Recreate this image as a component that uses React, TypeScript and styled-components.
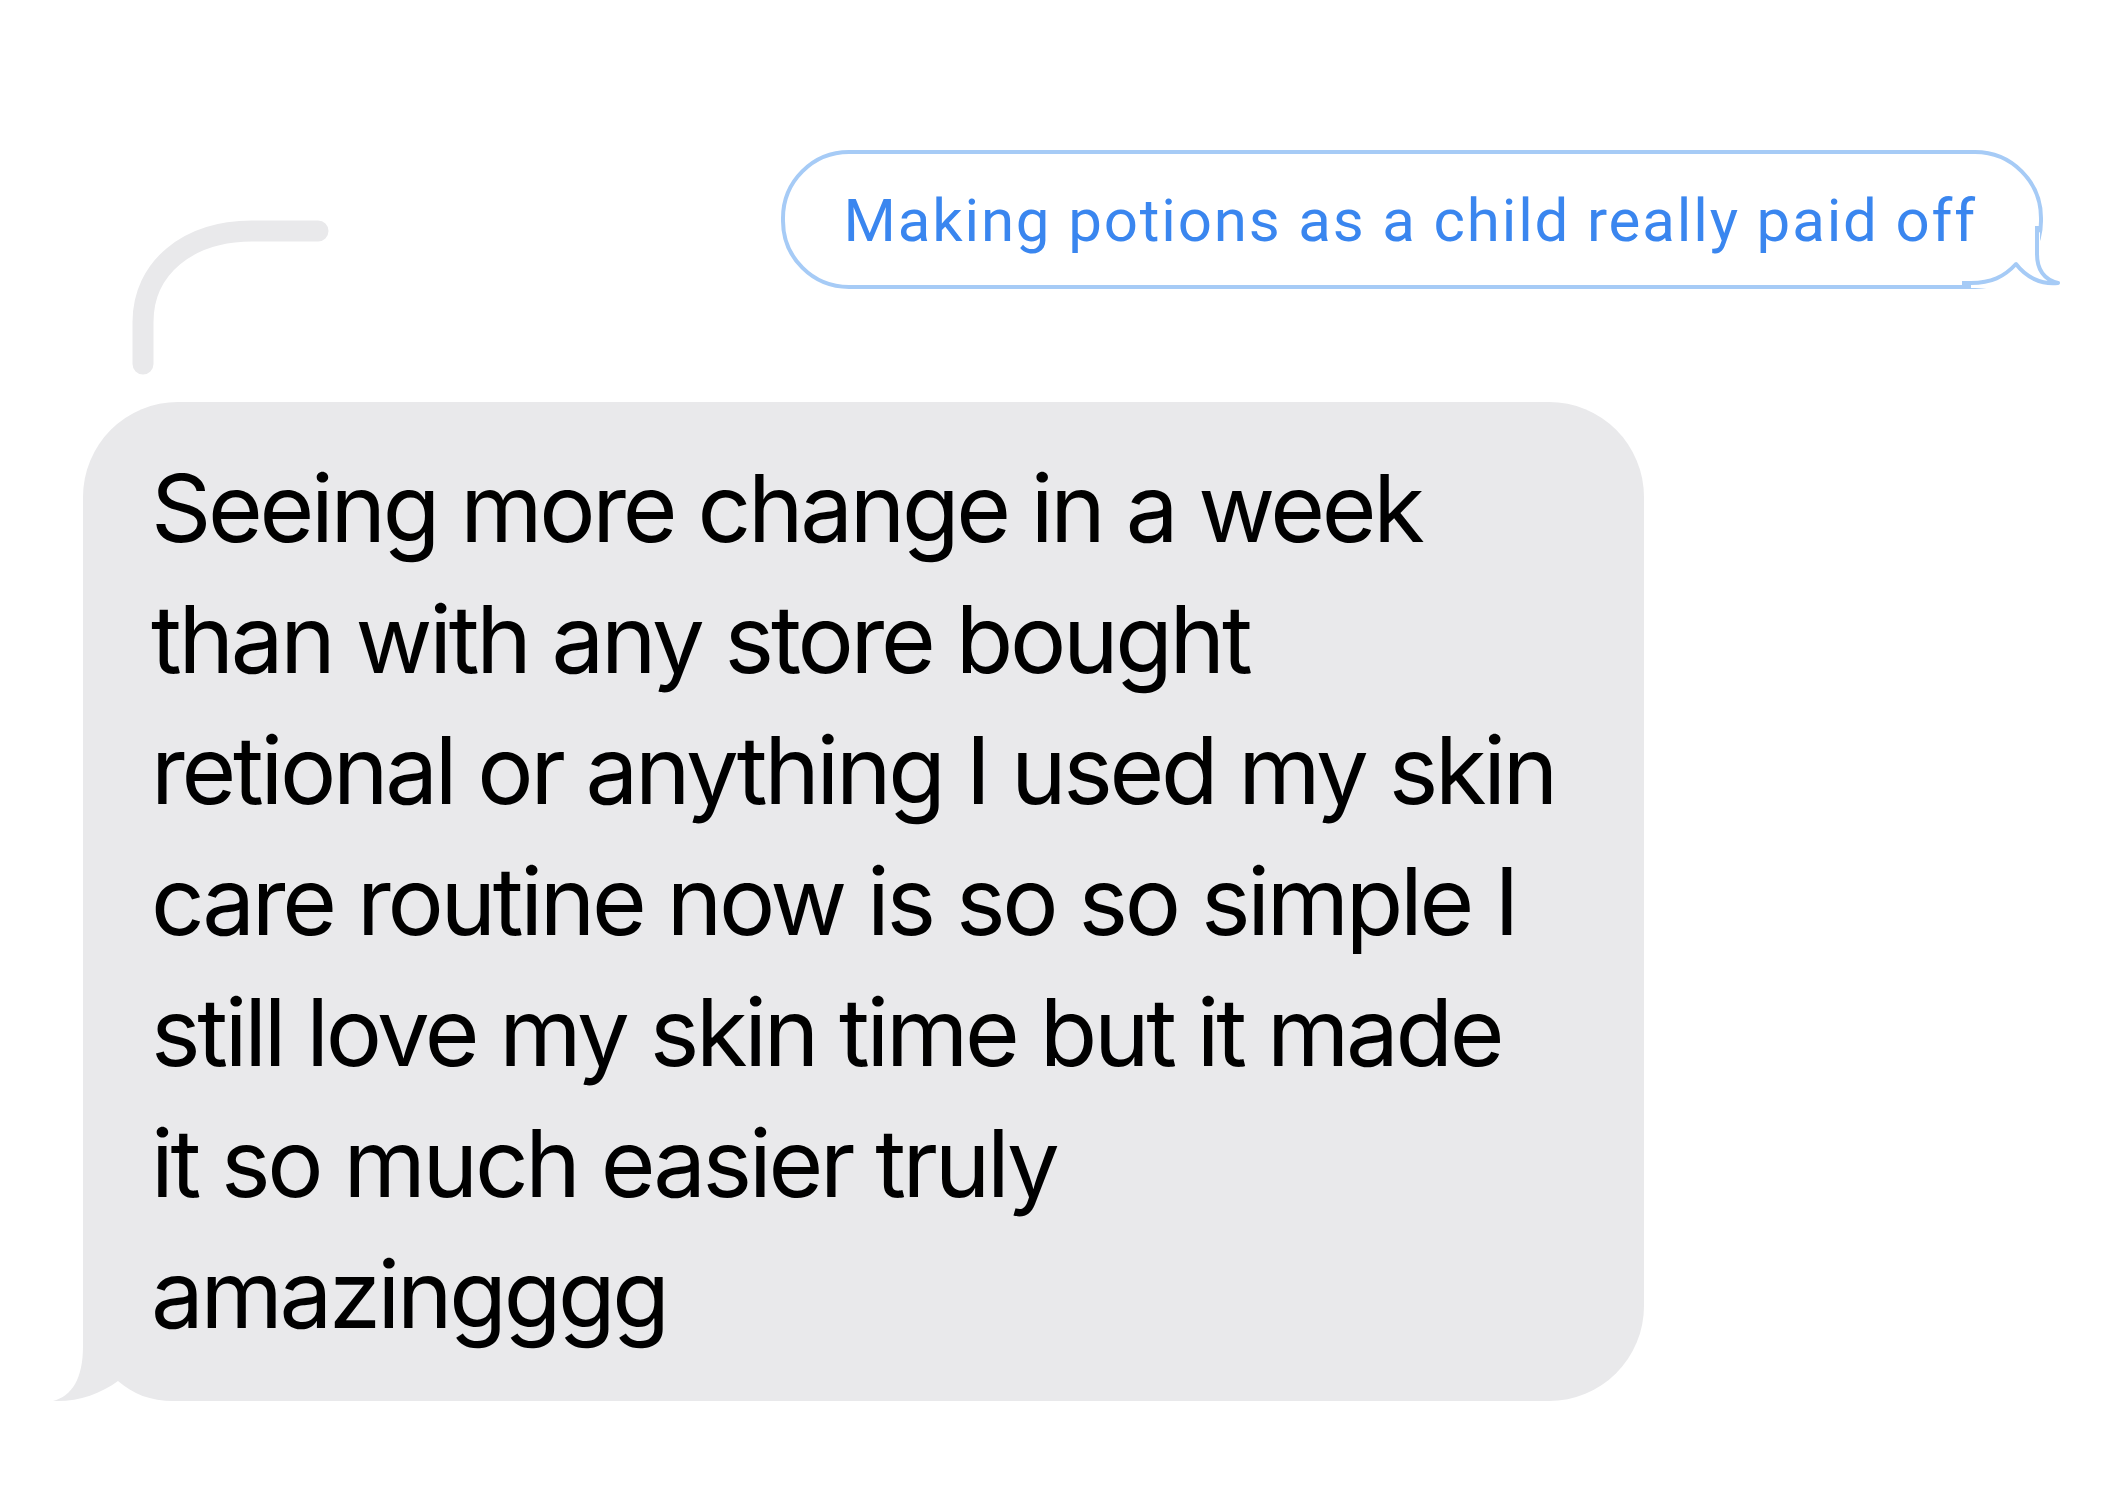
import React from "react";
import styled, { createGlobalStyle } from "styled-components";

const Global = createGlobalStyle`
  html, body { margin: 0; padding: 0; background: #ffffff; }
  * { box-sizing: border-box; }
`;

const Thread = styled.main`
  width: 2116px;
  min-height: 1512px;
  padding: 150px 73px 0 83px;
  display: flex;
  flex-direction: column;
  background: #ffffff;
`;

const SentRow = styled.div`
  display: flex;
  justify-content: flex-end;
`;

const SentBubble = styled.div`
  position: relative;
  border: 4px solid #a6cbf6;
  border-radius: 68px;
  padding: 32px 62px 29px 58px;
  font-family: Roboto, "Liberation Sans", sans-serif;
  font-size: 60px;
  line-height: 70px;
  letter-spacing: 1.85px;
  color: #3a86ef;
  white-space: nowrap;
  background: #ffffff;
`;

const Tail = styled.svg<{ $side: "left" | "right" }>`
  position: absolute;
  z-index: 0;
  bottom: ${(p) => (p.$side === "right" ? "-2px" : "0")};
  ${(p) => (p.$side === "right" ? "right: -22px;" : "left: -31px;")}
  overflow: visible;
`;

const ReplyLine = styled.svg`
  display: block;
  margin: -79px 0 0 37px;
`;

const ReceivedBubble = styled.div`
  position: relative;
  width: 1561px;
  margin-top: 17px;
  background: #e9e9eb;
  border-radius: 95px;
  padding: 41px 40px 41px 68px;
  font-family: Inter, Roboto, "Liberation Sans", sans-serif;
  font-size: 94px;
  line-height: 131px;
  letter-spacing: -3.3px;
  color: #000000;
`;

const Line = styled.span`
  position: relative;
  z-index: 1;
  display: block;
  white-space: nowrap;
`;

const received = [
  "Seeing more change in a week",
  "than with any store bought",
  "retional or anything I used my skin",
  "care routine now is so so simple I",
  "still love my skin time but it made",
  "it so much easier truly",
  "amazingggg",
];

export default function App() {
  return (
    <>
      <Global />
      <Thread>
        <SentRow>
          <SentBubble>
            <Line>Making potions as a child really paid off</Line>
            <Tail $side="right" width="100" height="95" viewBox="1965 196 100 95">
              <path d="M1975 278 L2044 236 L2044 292 L1975 292 Z" fill="#ffffff" />
              <path
                d="M2041 230 L2041 258 C2041 276 2050 284 2062 287 C2045 289 2030 281 2020 268 C2008 281 1995 287 1975 287 L1966 287"
                fill="none"
                stroke="#a6cbf6"
                strokeWidth="4"
                strokeLinejoin="round"
              />
            </Tail>
          </SentBubble>
        </SentRow>
        <ReplyLine width="220" height="175" viewBox="120 210 220 175">
          <path
            d="M143 364 L143 322 C143 268 188 231 252 231 L318 231"
            fill="none"
            stroke="#e9e9eb"
            strokeWidth="21"
            strokeLinecap="round"
          />
        </ReplyLine>
        <ReceivedBubble>
          {received.map((t) => (
            <Line key={t}>{t}</Line>
          ))}
          <Tail $side="left" width="130" height="100" viewBox="52 1300 130 100">
            <path
              d="M83 1300 L83 1345 C83 1378 72 1395 53 1400 C78 1401 100 1393 118 1380 C133 1393 150 1400 174 1400 L182 1400 L182 1300 Z"
              fill="#e9e9eb"
            />
          </Tail>
        </ReceivedBubble>
      </Thread>
    </>
  );
}
